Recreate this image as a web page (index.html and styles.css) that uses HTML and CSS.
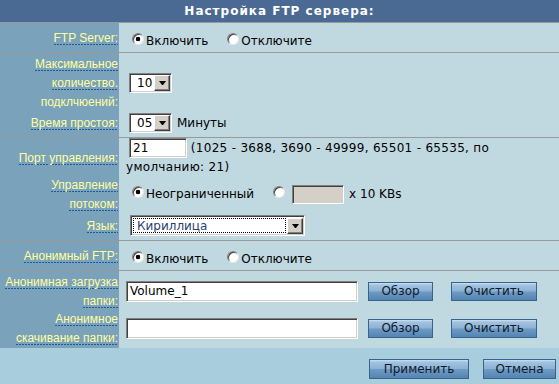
FILE: index.html
```html
<!DOCTYPE html>
<html lang="ru">
<head>
<meta charset="utf-8">
<title>Настройка FTP сервера</title>
<link rel="stylesheet" href="styles.css">
</head>
<body>
<div class="panel">
  <div class="title">Настройка FTP сервера:</div>

  <div class="row r30">
    <div class="lbl"><div><span>FTP Server:</span></div></div>
    <div class="val low">
      <label class="radio"><input type="radio" name="srv" checked>Включить</label>
      <label class="radio"><input type="radio" name="srv">Отключите</label>
    </div>
  </div>

  <div class="row r55">
    <div class="lbl"><div><span>Максимальное<br>количество.<br>подклчюений:</span></div></div>
    <div class="val">
      <span class="sel sel-sm"><select><option>10</option></select><span class="drop"></span></span>
    </div>
  </div>

  <div class="row r30">
    <div class="lbl"><div><span>Время простоя:</span></div></div>
    <div class="val">
      <span class="sel sel-sm"><select><option>05</option></select><span class="drop"></span></span>
      <span class="unit">Минуты</span>
    </div>
  </div>

  <div class="row r36">
    <div class="lbl"><div><span>Порт управления:</span></div></div>
    <div class="val top">
      <div class="port"><input class="inp inp-port" type="text" value="21"> <span class="hint">(1025 - 3688, 3690 - 49999, 65501 - 65535, по умолчанию: 21)</span></div>
    </div>
  </div>

  <div class="row r37">
    <div class="lbl"><div><span>Управление<br>потоком:</span></div></div>
    <div class="val">
      <label class="radio"><input type="radio" name="flow" checked>Неограниченный</label>
      <label class="radio"><input type="radio" name="flow"></label>
      <input class="inp inp-rate" type="text" disabled>
      <span class="unit">x 10 KBs</span>
    </div>
  </div>

  <div class="row r30">
    <div class="lbl"><div><span>Язык:</span></div></div>
    <div class="val">
      <span class="sel sel-lang"><select><option>Кириллица</option></select><span class="drop"></span></span>
    </div>
  </div>

  <div class="row r30">
    <div class="lbl"><div><span>Анонимный FTP:</span></div></div>
    <div class="val low">
      <label class="radio"><input type="radio" name="anon" checked>Включить</label>
      <label class="radio"><input type="radio" name="anon">Отключите</label>
    </div>
  </div>

  <div class="row r37">
    <div class="lbl"><div><span>Анонимная загрузка<br>папки:</span></div></div>
    <div class="val">
      <input class="inp inp-path" type="text" value="Volume_1">
      <button class="btn btn-browse" type="button">Обзор</button>
      <button class="btn btn-clear" type="button">Очистить</button>
    </div>
  </div>

  <div class="row r37">
    <div class="lbl"><div><span>Анонимное<br>скачивание папки:</span></div></div>
    <div class="val">
      <input class="inp inp-path" type="text" value="">
      <button class="btn btn-browse" type="button">Обзор</button>
      <button class="btn btn-clear" type="button">Очистить</button>
    </div>
  </div>

  <div class="actions">
    <button class="btn btn-apply" type="button">Применить</button>
    <button class="btn btn-cancel" type="button">Отмена</button>
  </div>
</div>
</body>
</html>
```

FILE: styles.css
```css
* { box-sizing: border-box; }
html, body { margin: 0; padding: 0; }
body {
  width: 559px;
  height: 384px;
  overflow: hidden;
  background: #a8cede;
  font-family: "DejaVu Sans", Verdana, sans-serif;
  font-size: 12px;
  color: #000;
}

.title {
  height: 23px;
  line-height: 22px;
  background: #4a6a93;
  border-bottom: 1px solid #999;
  color: #fff;
  font-weight: bold;
  text-align: center;
  letter-spacing: 1px;
}

.row {
  display: grid;
  grid-template-columns: 119px 1fr;
  border-bottom: 1px solid #999;
}
.r30 { height: 30px; }
.r36 { height: 36px; }
.r37 { height: 37px; }
.r55 { height: 55px; }

.lbl {
  background: #7aa2ba;
  color: #ffffa0;
  font-family: "Liberation Sans", Arial, sans-serif;
  font-size: 12px;
  line-height: 19px;
  text-align: right;
  padding: 2px 1px 0 0;
  display: flex;
  flex-direction: column;
  justify-content: center;
  white-space: nowrap;
}
.lbl span {
  background: repeating-linear-gradient(90deg, #1c5a9c 0 2px, transparent 2px 3px) left bottom / 100% 1px no-repeat;
  -webkit-box-decoration-break: clone;
  box-decoration-break: clone;
}

.val {
  background: #c0d9e1;
  padding-left: 7px;
  display: flex;
  align-items: center;
  white-space: nowrap;
}
.val.low { padding-top: 7px; }
.val.top { display: block; padding-top: 0; }

.radio {
  display: inline-flex;
  align-items: center;
}
.radio + .radio { margin-left: 13px; }
.radio input {
  -webkit-appearance: none;
  appearance: none;
  width: 12px;
  height: 12px;
  margin: 0 2px 4px 6px;
  border-radius: 50%;
  background: #fff;
  border: 1px solid;
  border-color: #808080 #e8e8e8 #e8e8e8 #808080;
  box-shadow: inset 1px 1px 0 #404040;
}
.radio input:checked {
  background: radial-gradient(circle, #000 0 2px, #fff 2.6px);
}

.sel {
  display: inline-flex;
  height: 20px;
  border: 1px solid;
  border-color: #808080 #fff #fff #808080;
  box-shadow: inset 1px 1px 0 #404040, inset -1px -1px 0 #d4d0c8;
  background: #fff;
  padding: 1px;
  margin-left: 3px;
}
.sel select {
  -webkit-appearance: none;
  appearance: none;
  border: 0;
  background: transparent;
  font: 12px "DejaVu Sans", Verdana, sans-serif;
  color: #000;
  padding: 0 0 0 6px;
  margin: 0;
  flex: 1;
  min-width: 0;
  outline: 0;
}
.sel-sm { width: 43px; }
.sel-lang { width: 175px; height: 21px; margin-left: 4px; }
.sel-lang select {
  margin: 1px;
  border: 1px dotted #000;
  padding-left: 3px;
  color: #283f70;
}
.drop {
  flex: none;
  width: 16px;
  height: 16px;
  align-self: center;
  background: #d4d0c8;
  border: 1px solid;
  border-color: #fff #404040 #404040 #fff;
  box-shadow: inset -1px -1px 0 #808080;
  display: flex;
  align-items: center;
  justify-content: center;
}
.drop::before {
  content: "";
  width: 1px;
  height: 0;
  border-top: 4px solid #000;
  border-left: 3px solid transparent;
  border-right: 3px solid transparent;
  margin-top: 1px;
}

.unit { margin-left: 5px; }

.inp {
  height: 20px;
  border: 1px solid;
  border-color: #808080 #fff #fff #808080;
  box-shadow: inset 1px 1px 0 #404040, inset -1px -1px 0 #d4d0c8;
  background: #fff;
  font: 12px "DejaVu Sans", Verdana, sans-serif;
  color: #000;
  padding: 0 3px;
  margin: 0;
  outline: 0;
}
.inp-port { width: 58px; margin-left: 3px; vertical-align: middle; }
.inp-rate { width: 52px; height: 19px; margin-left: 5px; background: #d4d0c8; }
.inp-path { width: 232px; height: 21px; }

.port { line-height: 19px; white-space: normal; padding-right: 4px; }
.hint { letter-spacing: 0.3px; }

.btn {
  height: 19px;
  padding: 0;
  margin: 0;
  border: 1px solid #36648f;
  background: linear-gradient(#cfe1f0 0, #a2c3df 12%, #8cb2d5 48%, #6f9ac4 52%, #5584b2 100%);
  font: 12px "DejaVu Sans", Verdana, sans-serif;
  color: #0d1a2a;
  line-height: 17px;
}
.btn-browse { width: 65px; margin-left: 10px; }
.btn-clear { width: 86px; margin-left: 18px; }

.actions {
  display: flex;
  justify-content: flex-end;
  gap: 14px;
  padding: 14px 3px 0 0;
}
.btn-apply { width: 100px; height: 20px; }
.btn-cancel { width: 73px; height: 20px; }
```
